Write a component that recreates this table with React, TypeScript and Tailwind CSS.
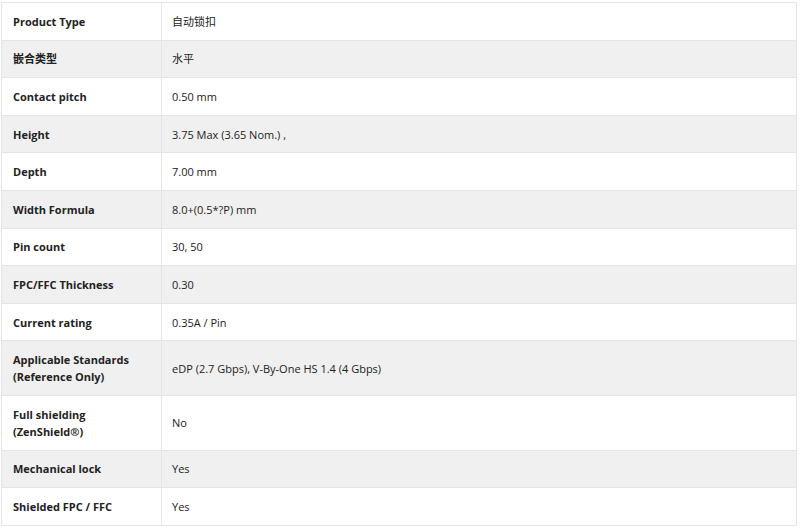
const rows: [string, string][] = [
  ['Product Type', '自动锁扣'],
  ['嵌合类型', '水平'],
  ['Contact pitch', '0.50 mm'],
  ['Height', '3.75 Max (3.65 Nom.) ,'],
  ['Depth', '7.00 mm'],
  ['Width Formula', '8.0+(0.5*?P) mm'],
  ['Pin count', '30, 50'],
  ['FPC/FFC Thickness', '0.30'],
  ['Current rating', '0.35A / Pin'],
  ['Applicable Standards (Reference Only)', 'eDP (2.7 Gbps), V-By-One HS 1.4 (4 Gbps)'],
  ['Full shielding (ZenShield®)', 'No'],
  ['Mechanical lock', 'Yes'],
  ['Shielded FPC / FFC', 'Yes'],
];

const App = () => {
  return (
    <div
      className="w-[800px] h-[528px] bg-white pt-[2px] pl-[1px] pr-[3px] text-[#222]"
      style={{ fontFamily: '"Open Sans", "Noto Sans CJK SC", sans-serif' }}
    >
      <table className="w-full border-collapse border border-[#e5e5e5] text-[11px] leading-[17px]">
        <tbody>
          {rows.map(([label, value], i) => (
            <tr key={label} className={i % 2 === 1 ? 'bg-[#f0f0f0]' : 'bg-white'}>
              <td className="w-[160px] border border-[#e5e5e5] pl-[11px] pr-[10px] py-[9.8px] font-bold align-middle">
                {label}
              </td>
              <td className="border border-[#e5e5e5] pl-[10px] pr-[10px] py-[9.8px] align-middle">
                {value}
              </td>
            </tr>
          ))}
        </tbody>
      </table>
    </div>
  );
};

export default App;
